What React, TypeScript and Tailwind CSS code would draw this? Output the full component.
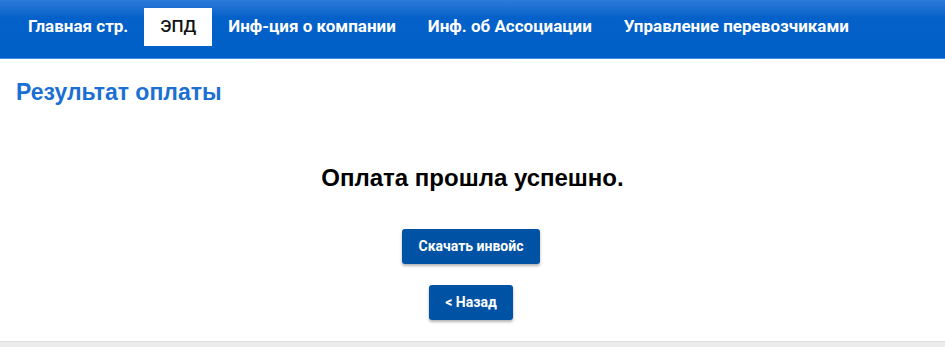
import React from 'react';

const navItems = [
  { label: 'Главная стр.', active: false },
  { label: 'ЭПД', active: true },
  { label: 'Инф-ция о компании', active: false },
  { label: 'Инф. об Ассоциации', active: false },
  { label: 'Управление перевозчиками', active: false },
];

export default function App() {
  return (
    <div className="w-[945px] h-[347px] bg-white flex flex-col overflow-hidden font-['Liberation_Sans',Arial,sans-serif]">
      <header className="h-[59px] shrink-0 bg-gradient-to-b from-[#2b7bd9] via-[#0461c9] via-30% to-[#005fc8] flex items-center pl-3 border-b border-[#3f8ce0]">
        <nav className="flex items-center h-[38px] mt-[-5px]">
          {navItems.map((item) => (
            <a
              key={item.label}
              href="#"
              className={
                item.active
                  ? "h-full flex items-center px-4 bg-white text-[#111] text-[17px] font-medium font-['Roboto',sans-serif]"
                  : "h-full flex items-center px-4 text-white text-[17px] font-bold font-['Roboto',sans-serif]"
              }
            >
              {item.label}
            </a>
          ))}
        </nav>
      </header>

      <main className="flex-1 flex flex-col">
        <h1 className="px-4 pt-[21px] text-[23px] font-bold text-[#1c6fd3] leading-6">Результат оплаты</h1>
        <div className="flex flex-col items-center pr-[3px]">
          <p className="mt-[60px] pl-[3px] text-[24px] font-bold text-black leading-7">Оплата прошла успешно.</p>
          <button className="mt-[37px] w-[138px] h-[35px] bg-[#0052a5] text-white text-[14px] font-bold font-['Roboto',sans-serif] rounded-[3px] shadow-[0_2px_3px_rgba(0,0,0,0.3)]">
            Скачать инвойс
          </button>
          <button className="mt-[21px] w-[84px] h-[35px] bg-[#0052a5] text-white text-[14px] font-bold font-['Roboto',sans-serif] rounded-[3px] shadow-[0_2px_3px_rgba(0,0,0,0.3)]">
            &lt; Назад
          </button>
        </div>
      </main>

      <footer className="h-[6px] shrink-0 bg-[#ececec] border-t border-[#dedede]" />
    </div>
  );
}
